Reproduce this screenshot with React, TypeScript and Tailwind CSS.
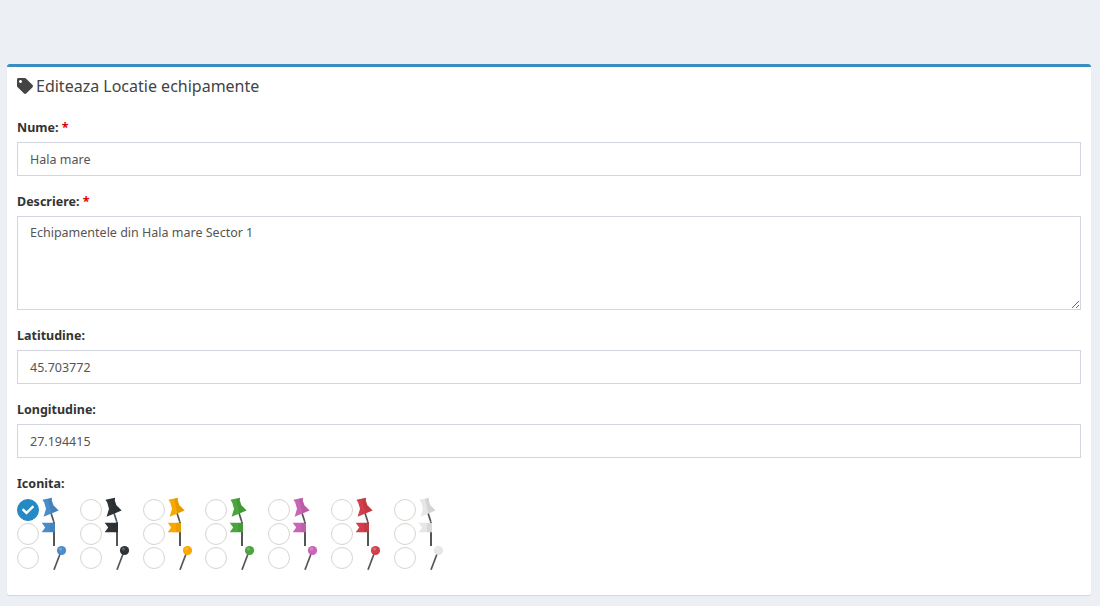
import React from "react";
import { FaTag, FaCheck } from "react-icons/fa";

const colors = ["#4a8cc9", "#2e3338", "#f9a800", "#4aa53c", "#c965b5", "#d23f4a", "#e6e6e6"];

const Pin: React.FC<{ color: string }> = ({ color }) => (
  <svg width="24" height="24" viewBox="0 0 24 24" className="overflow-visible">
    <path d="M10 15 L12.8 23.7" stroke="#555" strokeWidth="1.7" />
    <path d="M1.4 1.8 L11 -0.2 L10.8 2.6 L12.4 7.2 L17.6 12.4 L2.6 18.8 L5 10.8 L3.2 4.4 Z" fill={color} />
    <path d="M7 0.9 L11 -0.2 L10.8 2.6 L12.4 7.2 L17.6 12.4 L10.4 15.6 Z" fill="#000" fillOpacity="0.08" />
  </svg>
);

const Flag: React.FC<{ color: string }> = ({ color }) => (
  <svg width="24" height="24" viewBox="0 0 24 24" className="overflow-visible">
    <rect x="12" y="0" width="2" height="24" fill="#555" />
    <path d="M0.7 0.8 L14 0.8 L14 10.2 L0.7 10.2 L4.2 5.5 Z" fill={color} />
    <rect x="9" y="0.8" width="5" height="9.4" fill="#000" fillOpacity="0.06" />
  </svg>
);

const Ball: React.FC<{ color: string }> = ({ color }) => (
  <svg width="24" height="24" viewBox="0 0 24 24" className="overflow-visible">
    <path d="M19 8 L13 23.7" stroke="#555" strokeWidth="1.7" />
    <circle cx="20.5" cy="4.5" r="4.6" fill={color} />
    <circle cx="19.5" cy="3" r="1.8" fill="#fff" fillOpacity="0.2" />
  </svg>
);

const Radio: React.FC<{ checked?: boolean }> = ({ checked }) => (
  <span
    className={`flex h-[22px] w-[22px] items-center justify-center rounded-full border-[1.5px] ${
      checked ? "border-[#2489c5] bg-[#2489c5]" : "border-[#d8d5d0] bg-white"
    }`}
  >
    {checked && <FaCheck size={12} className="text-white" />}
  </span>
);

const Label: React.FC<{ text: string; required?: boolean }> = ({ text, required }) => (
  <label className="mb-[5px] block h-5 text-[12.5px] leading-[22px] font-bold text-[#333]">
    {text}
    {required && <span className="text-[#e00000]"> *</span>}
  </label>
);

const Field: React.FC<{ label: string; value: string; required?: boolean }> = ({ label, value, required }) => (
  <div className="mb-[15px]">
    <Label text={label} required={required} />
    <input
      readOnly
      value={value}
      className="block h-[34px] w-full border border-[#d2d6de] bg-white px-3 text-[12.5px] text-[#555] outline-none"
    />
  </div>
);

export default function App() {
  return (
    <div className="h-[606px] overflow-hidden bg-[#ecf0f5] pt-[64px] pr-[9px] pl-[7px] font-['Noto_Sans',sans-serif]">
      <div className="rounded-[3px] border-t-[3px] border-[#3a8dbf] bg-white px-[10px] pb-[25px] shadow-[0_1px_1px_rgba(0,0,0,0.1)]">
        <h3 className="mb-3 flex h-[38px] items-center gap-[3px] text-[16px] text-[#444]">
          <FaTag size={16} />
          Editeaza Locatie echipamente
        </h3>

        <Field label="Nume:" value="Hala mare" required />

        <div className="mb-[15px]">
          <Label text="Descriere:" required />
          <textarea
            readOnly
            value="Echipamentele din Hala mare Sector 1"
            className="block h-[94px] w-full resize-y border border-[#d2d6de] bg-white px-3 py-[7px] text-[12.5px] text-[#555] outline-none"
          />
        </div>

        <Field label="Latitudine:" value="45.703772" />
        <Field label="Longitudine:" value="27.194415" />

        <Label text="Iconita:" />
        <div className="flex">
          {colors.map((color, i) => (
            <div key={color} className="grid w-[62.83px] grid-cols-[22px_24px] gap-x-[2px]">
              {[Pin, Flag, Ball].map((Icon, j) => (
                <React.Fragment key={j}>
                  <div className="flex h-6 items-center">
                    <Radio checked={i === 0 && j === 0} />
                  </div>
                  <Icon color={color} />
                </React.Fragment>
              ))}
            </div>
          ))}
        </div>
      </div>
    </div>
  );
}
